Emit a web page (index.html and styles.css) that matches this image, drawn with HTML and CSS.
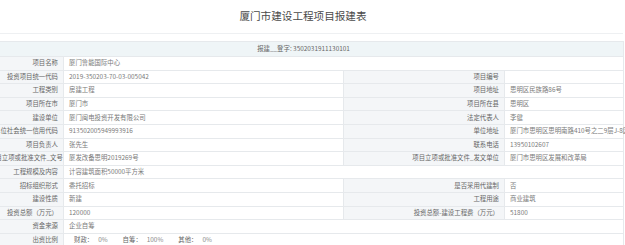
FILE: index.html
```html
<!DOCTYPE html>
<html lang="zh-CN">
<head>
<meta charset="utf-8">
<title>厦门市建设工程项目报建表</title>
<link rel="stylesheet" href="styles.css">
</head>
<body>
<div class="sheet">
  <div class="title">厦门市建设工程项目报建表</div>
  <table class="grid">
    <colgroup>
      <col class="c1"><col class="c2"><col class="c3"><col class="c4">
    </colgroup>
    <tr class="band"><td colspan="4">报建__登字: 3502031911130101</td></tr>
    <tr><th>项目名称</th><td colspan="3">厦门鲁能国际中心</td></tr>
    <tr><th>投资项目统一代码</th><td>2019-350203-70-03-005042</td><th>项目编号</th><td></td></tr>
    <tr><th>工程类别</th><td>房建工程</td><th>项目地址</th><td>思明区民族路86号</td></tr>
    <tr><th>项目所在市</th><td>厦门市</td><th>项目所在县</th><td>思明区</td></tr>
    <tr><th>建设单位</th><td>厦门闽电投资开发有限公司</td><th>法定代表人</th><td>李健</td></tr>
    <tr><th>单位社会统一信用代码</th><td>913502005949993916</td><th>单位地址</th><td>厦门市思明区思明南路410号之二9层J-8区</td></tr>
    <tr><th>项目负责人</th><td>张先生</td><th>联系电话</th><td>13950102607</td></tr>
    <tr><th>项目立项或批准文件_文号</th><td>厦发改备思明2019269号</td><th>项目立项或批准文件_发文单位</th><td>厦门市思明区发展和改革局</td></tr>
    <tr><th>工程规模及内容</th><td colspan="3">计容建筑面积50000平方米</td></tr>
    <tr><th>招标组织形式</th><td>委托招标</td><th>是否采用代建制</th><td>否</td></tr>
    <tr><th>建设性质</th><td>新建</td><th>工程用途</th><td>商业建筑</td></tr>
    <tr><th>投资总额（万元）</th><td>120000</td><th>投资总额-建设工程费（万元）</th><td>51800</td></tr>
    <tr><th>资金来源</th><td colspan="3">企业自筹</td></tr>
    <tr class="ratio"><th>出资比例</th><td colspan="3"><span class="k">财政：</span><span class="v">0%</span><span class="k">自筹：</span><span class="v">100%</span><span class="k">其他：</span><span class="v">0%</span></td></tr>
  </table>
</div>
</body>
</html>
```

FILE: styles.css
```css
html, body {
  margin: 0;
  padding: 0;
  overflow: hidden;
  background: #ffffff;
}

.sheet {
  width: 640px;
  margin-left: -17px;
  font-family: "Noto Sans CJK SC", "Noto Sans", sans-serif;
}

.title {
  height: 34px;
  border-bottom: 1px solid #eef0f2;
  box-sizing: border-box;
  font-size: 10.6px;
  line-height: 32px;
  text-align: center;
  color: #4a4a4a;
  margin-bottom: 7px;
}

.grid {
  width: 640px;
  border-collapse: collapse;
  table-layout: fixed;
  font-size: 6.4px;
}

.c1 { width: 80px; }
.c2 { width: 280px; }
.c3 { width: 161px; }
.c4 { width: 119px; }

.grid tr { height: 13.6px; }

.grid th,
.grid td {
  border: 1px solid #e6e9ec;
  padding: 0 5px;
  white-space: nowrap;
  line-height: 10px;
  vertical-align: middle;
}

.grid th {
  font-weight: normal;
  text-align: right;
  color: #666;
  background: #f4f6f8;
}

.grid td {
  text-align: left;
  color: #7a7a7a;
  background: #fff;
}

.grid .band td {
  background: #eff5f7;
  text-align: center;
  color: #666;
  height: 14px;
}

.ratio td {
  padding-left: 10px;
}

.ratio .k {
  color: #666;
  margin-right: 5px;
}

.ratio .v {
  color: #888;
  margin-right: 15px;
}
```
